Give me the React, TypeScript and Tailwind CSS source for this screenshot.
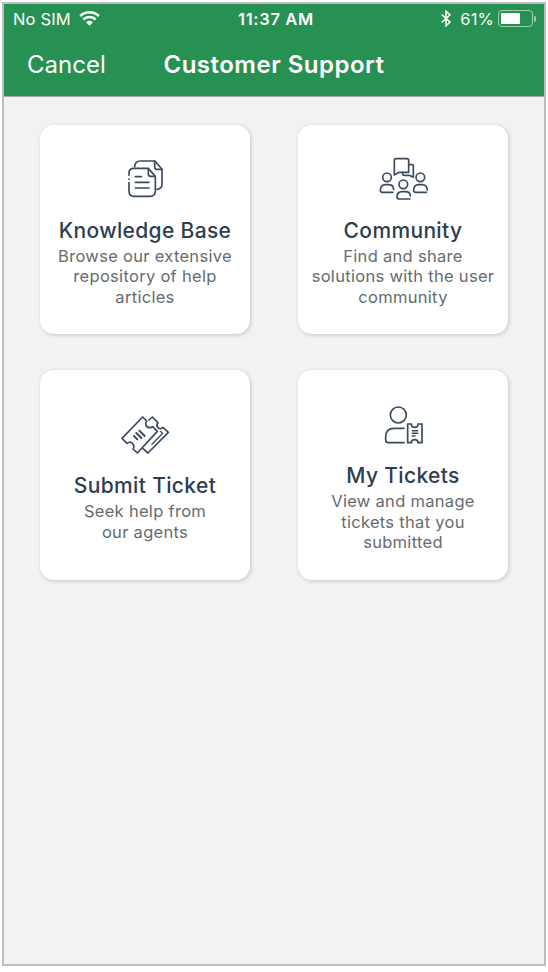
import { FC, ReactNode } from 'react'

interface IconProps {
  viewBox: string
  children: ReactNode
}

const CardIcon: FC<IconProps> = ({ viewBox, children }) => {
  return (
    <svg
      viewBox={viewBox}
      className="h-[52px] w-14"
      fill="none"
      stroke="#3a4b5f"
      strokeWidth="5"
      strokeLinecap="round"
      strokeLinejoin="round"
      aria-hidden="true"
    >
      {children}
    </svg>
  )
}

const ArticlesIcon = () => (
  <CardIcon viewBox="21 18 168 156">
    <path d="M74 65C75 54 80 48 91 48H135L156 73V118C156 127 150 132 141 133" />
    <path d="M134 49V66Q134 73 141 73H155" />
    <path d="M57 91V84Q57 70 71 70H115L136 94V138Q136 154 120 154H73Q57 154 57 137V113" />
    <path d="M57 102V103" />
    <path d="M115 71V87Q115 94 122 94H135" />
    <path d="M76 95H94M76 112H117M76 129H117" />
  </CardIcon>
)

const CommunityIcon = () => (
  <CardIcon viewBox="21 18 168 156">
    <path d="M83 41H117Q122 41 122 46V82H93L79 90V45Q79 41 83 41Z" />
    <path d="M122 59H132Q136 59 136 63V97L124 91H108Q104 91 104 87V83" />
    <circle cx="57" cy="97" r="13" />
    <circle cx="157" cy="97" r="13" />
    <circle cx="106" cy="118" r="13" />
    <path d="M75 142H43Q37 142 37 136C37 125 43 119 52 119H62C70 119 76 124 77 133" />
    <path d="M175 142H143Q137 142 137 136C137 125 143 119 152 119H162C172 119 178 125 178 136" />
    <path d="M126 162H94Q87 162 87 156C87 145 93 140 102 140H112C121 140 127 145 127 153" />
  </CardIcon>
)

const TicketsIcon = () => (
  <CardIcon viewBox="21 18 168 156">
    <path d="M98 48L110 60C104 68 107 80 120 80C124 80 126 79 128 77L142 91L82 156L69 144C73 139 72 132 67 127C62 122 55 123 51 127L36 112Z" />
    <path d="M117 57L127 48L144 65C139 71 140 76 144 80C148 85 155 84 159 79L175 94L114 156L98 142" />
    <path d="M151 91L158 97L126 130" strokeWidth="4" />
    <path d="M72 105L82 115M79 96L94 111M88 89L104 105" strokeWidth="6" />
  </CardIcon>
)

const MyTicketsIcon = () => (
  <CardIcon viewBox="21 3 168 156">
    <circle cx="91" cy="57" r="24" />
    <path d="M108 97H78C62 97 53 107 53 123V132Q53 140 61 140H108" />
    <path
      d="M119 84H130C130 91 134 94 140 94C146 94 150 91 150 84H162V140H150C150 134 146 131 140 131C134 131 130 134 130 140H119Z"
      strokeLinejoin="miter"
    />
    <path d="M133 104H149M133 112H149M133 120H141" strokeWidth="4.5" />
  </CardIcon>
)

const cards = [
  {
    title: 'Knowledge Base',
    lines: ['Browse our extensive', 'repository of help', 'articles'],
    Icon: ArticlesIcon,
  },
  {
    title: 'Community',
    lines: ['Find and share', 'solutions with the user', 'community'],
    Icon: CommunityIcon,
  },
  {
    title: 'Submit Ticket',
    lines: ['Seek help from', 'our agents'],
    Icon: TicketsIcon,
  },
  {
    title: 'My Tickets',
    lines: ['View and manage', 'tickets that you', 'submitted'],
    Icon: MyTicketsIcon,
  },
]

const StatusBar = () => {
  return (
    <div className="grid h-[30px] grid-cols-[1fr_auto_1fr] items-center pr-2 pl-[9px] text-[16.5px] leading-none">
      <div className="flex items-center gap-2">
        <span className="tracking-[0.15px]">No SIM</span>
        <svg viewBox="0 0 60 44" className="mb-0.5 h-[15px] w-[21px]" fill="none" stroke="white" strokeWidth="7.5" aria-hidden="true">
          <path d="M2.5 14.5C18 0 42 0 57.5 14.5" />
          <path d="M12 25C22 15.5 38 15.5 48 25" />
          <path d="M20 33C26 27.5 34 27.5 40 33L30 43Z" fill="white" stroke="none" />
        </svg>
      </div>
      <span className="ml-[3px] font-semibold tracking-[0.65px]">11:37 AM</span>
      <div className="flex items-center justify-end">
        <svg viewBox="0 0 30 50" className="mr-[9px] mb-0.5 h-[17px] w-2.5" fill="none" stroke="white" strokeWidth="4.5" aria-hidden="true">
          <path d="M2 13L27 36L15 47V3L27 14L2 37" />
        </svg>
        <span className="mr-[4px] tracking-[0.2px]">61%</span>
        <span className="mb-px flex h-[17px] w-[35px] rounded-[4px] border border-white/55 p-[2px]">
          <span className="w-[19px] rounded-[1px] bg-white" />
        </span>
        <span className="ml-[1px] h-[6px] w-[2px] rounded-r-full bg-white/55" />
      </div>
    </div>
  )
}

export default function App() {
  return (
    <div className="h-[972px] w-[548px] bg-white p-[2px] pb-[6px] font-['Inter','Liberation_Sans',sans-serif]">
      <div className="flex h-full w-[544px] flex-col border-2 border-[#bdbdbd] bg-[#f2f2f5]">
        <header className="h-[93px] border-b border-[#a5a8a9] bg-[#279153] text-white">
          <StatusBar />
          <div className="grid h-[62px] grid-cols-[1fr_auto_1fr] items-center px-[23px] text-[24px]">
            <button className="justify-self-start">Cancel</button>
            <h1 className="font-semibold tracking-[0.5px]">Customer Support</h1>
          </div>
        </header>
        <main className="grid grid-cols-[210px_210px] gap-x-12 gap-y-9 px-9 pt-7">
          {cards.map(({ title, lines, Icon }) => (
            <section
              key={title}
              className="flex h-[209.4px] flex-col items-center justify-center rounded-[14px] bg-white text-center shadow-[1px_1px_4px_rgba(0,0,0,0.18)]"
            >
              <Icon />
              <h2 className="mt-[13.6px] text-[21px] leading-[27px] font-medium tracking-[0.35px] whitespace-nowrap text-[#2d3e50]">
                {title}
              </h2>
              <p className="mt-[2px] mb-[1px] text-[16.5px] leading-[20.5px] tracking-[0.3px] whitespace-nowrap text-[#666b70]">
                {lines.map((line) => (
                  <span key={line} className="block">
                    {line}
                  </span>
                ))}
              </p>
            </section>
          ))}
        </main>
      </div>
    </div>
  )
}
